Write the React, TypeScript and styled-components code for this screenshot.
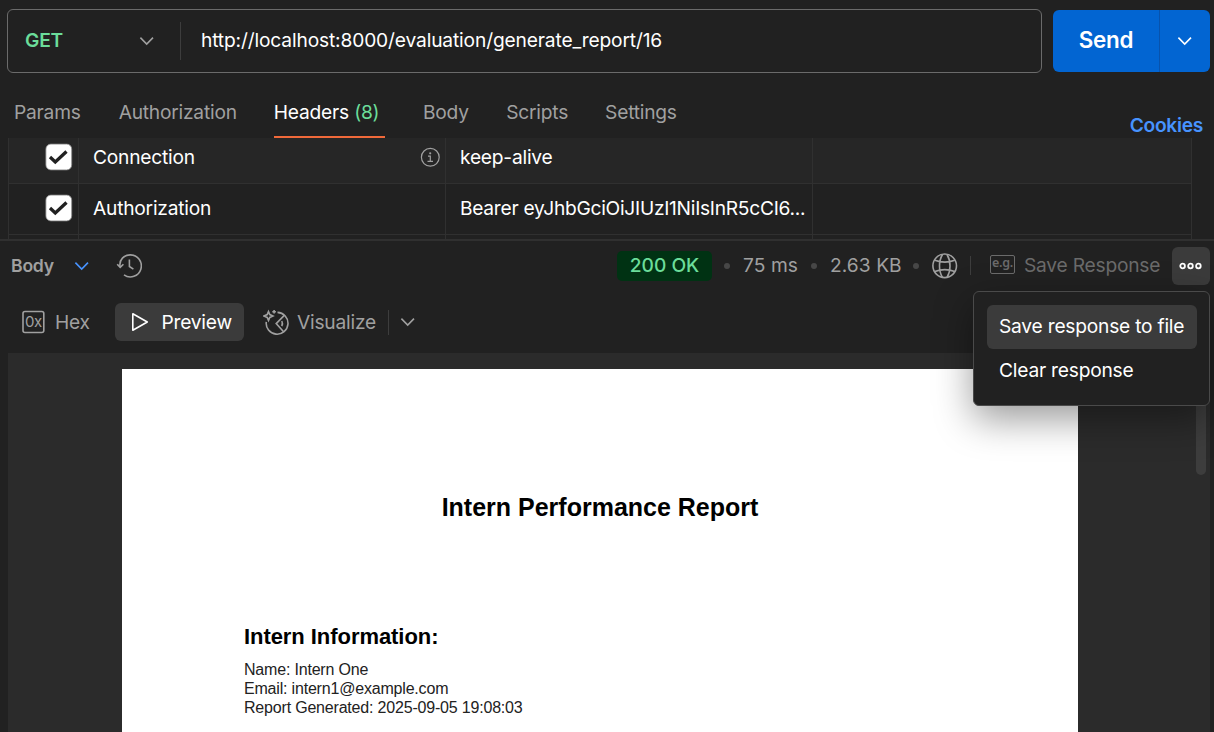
import React from "react";
import styled, { createGlobalStyle } from "styled-components";

const Global = createGlobalStyle`
  * { box-sizing: border-box; }
  body {
    margin: 0;
    background: #212121;
    overflow: hidden;
    font-family: Inter, "Liberation Sans", sans-serif;
    font-size: 19.2px;
    letter-spacing: -0.22px;
    color: #fff;
  }
`;

const Screen = styled.div`
  height: 732px;
  display: flex;
  flex-direction: column;
  background: #212121;
  white-space: nowrap;
  overflow: hidden;
  & > * { flex-shrink: 0; }
`;

/* Request line */
const RequestLine = styled.div`
  display: flex;
  align-items: center;
  gap: 11px;
  padding: 9px 4px 0 7px;
  height: 73px;
`;
const UrlBox = styled.div`
  flex: 1;
  height: 64px;
  display: flex;
  align-items: center;
  border: 1px solid #6b6b6b;
  border-radius: 6px;
`;
const Method = styled.div`
  width: 173px;
  height: 38px;
  padding: 0 25px 0 17px;
  display: flex;
  align-items: center;
  justify-content: space-between;
  border-right: 1px solid #3d3d3d;
  color: #6bdd9a;
  font-weight: 600;
  line-height: 22px;
`;
const MethodName = styled.span`
  padding-bottom: 2px;
`;
const Url = styled.div`
  padding: 0 0 2px 20px;
  letter-spacing: -0.15px;
`;
const SendGroup = styled.div`
  display: flex;
  width: 157px;
  height: 62px;
  border-radius: 6px;
  background: #0265d2;
`;
const SendButton = styled.div`
  width: 107px;
  display: grid;
  place-items: center;
  padding-bottom: 3px;
  border-right: 1px solid #0853ad;
  font-size: 22.4px;
  font-weight: 600;
`;
const SendMore = styled.div`
  flex: 1;
  display: grid;
  place-items: center;
  padding-right: 1px;
`;

/* Request tabs */
const Tabs = styled.div`
  height: 65px;
  padding: 0 11px 0 14px;
  display: flex;
  align-items: flex-end;
`;
const Tab = styled.div<{ $active?: boolean; $gap: number }>`
  height: 52px;
  line-height: 53px;
  margin-right: ${(p) => p.$gap}px;
  color: ${(p) => (p.$active ? "#fff" : "#a0a0a0")};
  box-shadow: ${(p) => (p.$active ? "inset 0 -2px #f0693a" : "none")};
  padding-right: ${(p) => (p.$active ? 6 : 0)}px;
`;
const Count = styled.span`
  color: #6bdd9a;
`;
const Cookies = styled.div`
  margin-left: auto;
  height: 26px;
  line-height: 26px;
  color: #4793ff;
  font-weight: 600;
  letter-spacing: -0.3px;
`;

/* Header table */
const Table = styled.div`
  height: 101px;
  margin: 0 22px 0 8px;
  border: solid #303030;
  border-width: 0 1px;
  overflow: hidden;
`;
const Row = styled.div<{ $shade?: boolean; $height: number }>`
  display: grid;
  grid-template-columns: 70px 367px 367px 1fr;
  height: ${(p) => p.$height}px;
  border-bottom: 1px solid #303030;
  background: ${(p) => (p.$shade ? "#262626" : "#212121")};
`;
const Cell = styled.div`
  display: flex;
  align-items: center;
  justify-content: space-between;
  padding: 0 5px 7px 14px;
  border-right: 1px solid #303030;
  &:first-child { justify-content: flex-end; }
  &:last-child { border-right: 0; }
`;
const LowCell = styled(Cell)`
  padding-bottom: 2px;
`;
const Token = styled.span`
  letter-spacing: -0.28px;
`;

/* Response bar */
const ResponseBar = styled.div`
  height: 51px;
  border-top: 2px solid #303030;
  display: flex;
  align-items: center;
  padding: 0 4px 0 11px;
  color: #a0a0a0;
`;
const ResponseTitle = styled.div`
  width: 63px;
  font-size: 17.6px;
  font-weight: 600;
`;
const HistoryButton = styled.div`
  display: flex;
  margin-left: 26px;
`;
const Status = styled.div`
  width: 95px;
  height: 30px;
  margin-left: auto;
  border-radius: 5px;
  display: grid;
  place-items: center;
  padding-bottom: 1px;
  background: #003213;
  color: #6bdd9a;
  font-weight: 500;
  letter-spacing: 0;
`;
const Dot = styled.div`
  width: 6px;
  height: 6px;
  border-radius: 50%;
  background: #474747;
`;
const Metric = styled.div<{ $width: number }>`
  width: ${(p) => p.$width}px;
  padding-bottom: 2px;
  letter-spacing: 0.05px;
`;
const Divider = styled.div<{ $height: number }>`
  width: 1px;
  height: ${(p) => p.$height}px;
  background: #3d3d3d;
`;
const SaveResponse = styled.div`
  display: flex;
  align-items: center;
  gap: 9px;
  width: 182px;
  padding-bottom: 2px;
  color: #6b6b6b;
`;
const ExampleBadge = styled.span`
  width: 25px;
  height: 19px;
  border: 1.5px solid #6b6b6b;
  border-radius: 2px;
  font-family: "Noto Sans", sans-serif;
  font-size: 12.5px;
  font-weight: 600;
  line-height: 14px;
  letter-spacing: -0.3px;
  text-align: center;
`;
const MoreButton = styled.div`
  width: 38px;
  height: 38px;
  border-radius: 6px;
  background: #3b3b3b;
  display: grid;
  place-items: center;
`;

/* View switcher */
const ViewBar = styled.div`
  height: 63px;
  padding: 13px 0 0 22px;
  display: flex;
  align-items: flex-start;
  color: #a0a0a0;
`;
const View = styled.div<{ $active?: boolean; $width: number }>`
  width: ${(p) => p.$width}px;
  height: 38px;
  display: flex;
  align-items: center;
  border-radius: 6px;
  background: ${(p) => (p.$active ? "#3b3b3b" : "transparent")};
  color: ${(p) => (p.$active ? "#fff" : "#a0a0a0")};
  padding-left: ${(p) => (p.$active ? 16 : 0)}px;
`;
const ViewLabel = styled.span<{ $gap: number }>`
  margin-left: ${(p) => p.$gap}px;
`;

/* Preview */
const Viewer = styled.div`
  height: 379px;
  margin: 0 4px 0 8px;
  background: #2b2b2b;
  padding: 16px 4px 0 114px;
  display: flex;
  align-items: flex-start;
`;
const Paper = styled.article`
  width: 956px;
  height: 363px;
  padding: 123px 122px 0;
  background: #fff;
  color: #000;
  font-family: "Liberation Sans", Arial, sans-serif;
`;
const ReportTitle = styled.h1`
  margin: 0;
  font-size: 25px;
  line-height: 30px;
  letter-spacing: 0;
  text-align: center;
`;
const SectionTitle = styled.h2`
  margin: 102px 0 0;
  font-size: 22px;
  line-height: 26px;
  letter-spacing: -0.06px;
`;
const Facts = styled.div`
  margin-top: 10px;
  font-size: 16px;
  line-height: 19px;
  letter-spacing: -0.19px;
  color: #222;
`;
const ScrollThumb = styled.div`
  width: 10px;
  height: 106px;
  margin-left: auto;
  border-radius: 5px;
  background: #3d3d3d;
`;

/* Overflow menu */
const Menu = styled.div`
  position: absolute;
  left: 973px;
  top: 291px;
  width: 237px;
  height: 115px;
  padding: 13px 12px 0 13px;
  border: 1px solid #4a4a4a;
  border-radius: 6px;
  background: #212121;
  box-shadow: 0 13px 38px rgba(0, 0, 0, 0.4);
`;
const MenuItem = styled.div<{ $active?: boolean }>`
  height: 44px;
  line-height: 43px;
  padding-left: 12px;
  border-radius: 6px;
  background: ${(p) => (p.$active ? "#3b3b3b" : "transparent")};
`;
const Icon = styled.svg`
  display: block;
  flex: none;
  fill: none;
  stroke-width: 1.6;
`;

const Chevron = ({ color }: { color: string }) => (
  <Icon width="16" height="16" viewBox="0 0 16 16" stroke={color}>
    <path d="M1.4 4.6 7.700 11l6.300-6.4" />
  </Icon>
);

const Checkbox = () => (
  <Icon width="28" height="28" viewBox="0 0 28 28">
    <rect x="0.9" y="1.1" width="25.8" height="25.8" rx="5" fill="#fff" stroke="#8a8a8a" style={{ strokeWidth: 0.8 }} />
    <path d="m5 14 5.300 5L21.500 8.500" stroke="#212121" style={{ strokeWidth: 3.3 }} />
  </Icon>
);

const Info = () => (
  <Icon width="20" height="20" viewBox="0 0 20 20" stroke="#a0a0a0" style={{ strokeWidth: 1.2 }}>
    <circle cx="10.300" cy="10.300" r="8.900" />
    <path d="M8 9.100h2.300v5M7.500 14.400h5.500" />
    <circle cx="10.200" cy="6.300" r="1.100" fill="#a0a0a0" stroke="none" />
  </Icon>
);

const History = () => (
  <Icon width="26" height="26" viewBox="0 0 26 26" stroke="#a0a0a0">
    <path d="M4.200 14.200C2.500 6.500 8.500 1.900 14.200 1.900a11 11 0 1 1-6.200 20" />
    <path d="m1.200 11.200 3 3.200 3.200-3.200M13.400 6.500v7l4 2.600" />
  </Icon>
);

const Globe = () => (
  <Icon width="26" height="26" viewBox="0 0 26 26" stroke="#a0a0a0">
    <circle cx="12.700" cy="12.800" r="11.800" />
    <path d="M10.500 1.500c-4 6.500-4 16.500 0 23M15 1.500c4 6.500 4 16.500 0 23M2.800 7.300c6 2.200 14 2.200 20 0M2.800 18.500c6-2.200 14-2.200 20 0" />
  </Icon>
);

const HexIcon = () => (
  <Icon width="23" height="24" viewBox="0 0 23 24" stroke="#a0a0a0">
    <rect x="1" y="1.500" width="20.800" height="21" rx="2" />
    <text x="11.300" y="17.300" textAnchor="middle" fontSize="15" letterSpacing="-0.600" fill="#a0a0a0" stroke="none">0x</text>
  </Icon>
);

const Play = () => (
  <Icon width="18" height="20" viewBox="0 0 18 20" stroke="#fff" strokeLinejoin="round">
    <path d="M1.800 1.800v16.400L16.300 10z" />
  </Icon>
);

const VisualizeIcon = () => (
  <Icon width="26" height="26" viewBox="0 0 26 26" stroke="#a0a0a0">
    <path d="M3.300 12.800A10.900 10.900 0 1 0 14.500 3.400" />
    <path d="M21.300 6.400 13.200 14.600 20.800 23" />
    <path d="M18.800 12c.8 1.600.8 3.600 0 5.200" />
    <path d="M5.500 2.600 6.800 5.600 9.900 7 6.800 8.400 5.500 11.400 4.200 8.400 1.100 7 4.200 5.600z" />
    <path d="M11.100.900v3.600M9.300 2.700h3.600" />
  </Icon>
);

const More = () => (
  <Icon width="24" height="8" viewBox="0 0 24 8" stroke="#fff" style={{ strokeWidth: 1.8 }}>
    <circle cx="3.600" cy="4" r="2.300" />
    <circle cx="11.500" cy="4" r="2.300" />
    <circle cx="19.400" cy="4" r="2.300" />
  </Icon>
);

const Gap = styled.div<{ $width: number }>`
  width: ${(p) => p.$width}px;
`;

export default function App() {
  return (
    <Screen>
      <Global />
      <RequestLine>
        <UrlBox>
          <Method>
            <MethodName>GET</MethodName>
            <Chevron color="#a0a0a0" />
          </Method>
          <Url>http://localhost:8000/evaluation/generate_report/16</Url>
        </UrlBox>
        <SendGroup>
          <SendButton>Send</SendButton>
          <SendMore>
            <Chevron color="#fff" />
          </SendMore>
        </SendGroup>
      </RequestLine>

      <Tabs>
        <Tab $gap={38}>Params</Tab>
        <Tab $gap={37}>Authorization</Tab>
        <Tab $gap={37.5} $active>
          Headers <Count>(8)</Count>
        </Tab>
        <Tab $gap={37.5}>Body</Tab>
        <Tab $gap={37}>Scripts</Tab>
        <Tab $gap={0}>Settings</Tab>
        <Cookies>Cookies</Cookies>
      </Tabs>

      <Table>
        <Row $shade $height={46}>
          <Cell><Checkbox /></Cell>
          <Cell>Connection<Info /></Cell>
          <Cell>keep-alive</Cell>
          <Cell />
        </Row>
        <Row $height={51}>
          <LowCell><Checkbox /></LowCell>
          <LowCell>Authorization</LowCell>
          <LowCell><Token>Bearer eyJhbGciOiJIUzI1NiIsInR5cCI6...</Token></LowCell>
          <LowCell />
        </Row>
        <Row $height={51}>
          <Cell />
          <Cell />
          <Cell />
          <Cell />
        </Row>
      </Table>

      <ResponseBar>
        <ResponseTitle>Body</ResponseTitle>
        <Chevron color="#4793ff" />
        <HistoryButton><History /></HistoryButton>
        <Status>200 OK</Status>
        <Gap $width={12} />
        <Dot />
        <Gap $width={13} />
        <Metric $width={68}>75 ms</Metric>
        <Dot />
        <Gap $width={13} />
        <Metric $width={83}>2.63 KB</Metric>
        <Dot />
        <Gap $width={13} />
        <Globe />
        <Gap $width={12} />
        <Divider $height={19} />
        <Gap $width={19} />
        <SaveResponse>
          <ExampleBadge>e.g.</ExampleBadge>
          Save Response
        </SaveResponse>
        <MoreButton><More /></MoreButton>
      </ResponseBar>

      <ViewBar>
        <View $width={93}>
          <HexIcon />
          <ViewLabel $gap={10}>Hex</ViewLabel>
        </View>
        <View $width={129} $active>
          <Play />
          <ViewLabel $gap={12.5}>Preview</ViewLabel>
        </View>
        <Gap $width={19} />
        <View $width={125}>
          <VisualizeIcon />
          <ViewLabel $gap={8}>Visualize</ViewLabel>
        </View>
        <View $width={40}>
          <Divider $height={25} />
          <Gap $width={11} />
          <Chevron color="#a0a0a0" />
        </View>
      </ViewBar>

      <Viewer>
        <Paper>
          <ReportTitle>Intern Performance Report</ReportTitle>
          <SectionTitle>Intern Information:</SectionTitle>
          <Facts>
            <div>Name: Intern One</div>
            <div>Email: intern1@example.com</div>
            <div>Report Generated: 2025-09-05 19:08:03</div>
          </Facts>
        </Paper>
        <ScrollThumb />
      </Viewer>

      <Menu>
        <MenuItem $active>Save response to file</MenuItem>
        <MenuItem>Clear response</MenuItem>
      </Menu>
    </Screen>
  );
}
